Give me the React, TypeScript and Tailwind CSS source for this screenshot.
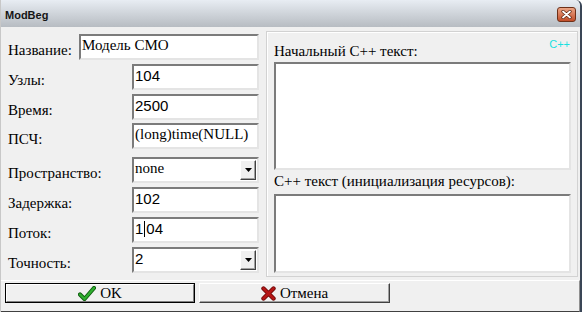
import React from "react"

const SANS = "font-['Liberation_Sans',Arial,sans-serif]"

interface IField {
    label: string,
    value: React.ReactNode,
    labelW?: string,
    inputW?: string,
    mono?: boolean,
    select?: boolean,
    gap?: string
}

const DropArrow = () => (
    <div className="w-[16px] h-[20px] mt-[1px] mr-[1px] flex items-center justify-center bg-[#f0f0f0] border border-t-white border-l-white border-b-[#404040] border-r-[#404040] shadow-[inset_-1px_-1px_0_#a0a0a0]">
        <svg width="7" height="4" viewBox="0 0 7 4"><path d="M0 0H7L3.5 4Z" fill="#000" /></svg>
    </div>
)

const Row = (props: IField) => {
    const { label, value, select, mono } = props
    return (
        <div className={`flex items-start h-[26px] ${props.gap ?? 'mt-[4px]'}`}>
            <div className={`${props.labelW ?? 'w-[124px]'} mt-[8px] text-[15px] leading-[17px] text-black whitespace-nowrap`}>{label}</div>
            <div className={`${props.inputW ?? 'w-[127px]'} h-[26px] bg-white border-2 border-t-[#7b7b7b] border-l-[#7b7b7b] border-b-[#e4e4e4] border-r-[#e4e4e4] flex items-start justify-between`}>
                <div className={`${mono ? SANS : ''} pl-[1px] pt-[1px] text-[15px] leading-[17px] text-black whitespace-nowrap`}>{value}</div>
                {select && <DropArrow />}
            </div>
        </div>
    )
}

const CheckIcon = () => (
    <svg width="18" height="15" viewBox="0 0 18 15">
        <path d="M2 8.5 L6.5 13 L16 2" fill="none" stroke="#0d5a0d" strokeWidth="4.2" strokeLinecap="round" strokeLinejoin="round" />
        <path d="M2 8.5 L6.5 13 L16 2" fill="none" stroke="#2fae2f" strokeWidth="2.4" strokeLinecap="round" strokeLinejoin="round" />
    </svg>
)

const CrossIcon = () => (
    <svg width="15" height="15" viewBox="0 0 15 15">
        <path d="M2.5 2.5 L12.5 12.5 M12.5 2.5 L2.5 12.5" stroke="#6e0808" strokeWidth="4.4" strokeLinecap="round" />
        <path d="M2.5 2.5 L12.5 12.5 M12.5 2.5 L2.5 12.5" stroke="#b51616" strokeWidth="2.6" strokeLinecap="round" />
    </svg>
)

const App = () => {
    return (
        <div className="w-[584px] h-[316px] bg-white overflow-hidden" style={{ fontFamily: '"Liberation Serif"' }}>
            <div className="w-[582px] h-[312px] bg-[#f0f0f0] border-l border-l-[#c8c8c8] border-r-2 border-r-[#3a4656] rounded-tr-[6px] flex flex-col">
                {/* title bar */}
                <div className="h-[27px] flex items-center justify-between pl-[4px] pr-[4px] rounded-tr-[6px] bg-gradient-to-b from-[#e8edf3] to-[#b7bcc2]">
                    <div className={`${SANS} text-[11px] font-bold text-[#151515] mt-[3px]`}>ModBeg</div>
                    <div className="w-[19px] h-[15px] mt-[2px] rounded-[3px] border border-[#6e3018] bg-gradient-to-b from-[#eba585] to-[#c24d28] flex items-center justify-center">
                        <svg width="11" height="9" viewBox="0 0 11 9">
                            <path d="M2 1.5 L9 7.5 M9 1.5 L2 7.5" stroke="#5a2410" strokeWidth="3.2" strokeLinecap="round" />
                            <path d="M2 1.5 L9 7.5 M9 1.5 L2 7.5" stroke="#fff" strokeWidth="1.8" strokeLinecap="round" />
                        </svg>
                    </div>
                </div>

                {/* body */}
                <div className="flex h-[250px]">
                    <div className="w-[264px] pl-[7px] pt-[7px]">
                        <Row label="Название:" value="Модель СМО" labelW="w-[71px]" inputW="w-[180px]" gap="mt-0" />
                        <Row label="Узлы:" value="104" mono />
                        <Row label="Время:" value="2500" mono />
                        <Row label="ПСЧ:" value="(long)time(NULL)" gap="mt-[3px]" />
                        <Row label="Пространство:" value="none" select gap="mt-[8px]" />
                        <Row label="Задержка:" value="102" mono />
                        <Row label="Поток:" mono value={<div className="flex items-center">1<div className="w-[1px] h-[16px] bg-black mx-[1px]" />04</div>} />
                        <Row label="Точность:" value="2" mono select />
                    </div>

                    <div className="relative w-[312px] h-[246px] mt-[4px] ml-[1px] border border-[#d2d2d2] shadow-[inset_1px_1px_0_#fff] pl-[7px] pr-[6px] pt-[11px] flex flex-col">
                        <div className={`${SANS} absolute top-[6px] right-[7px] text-[11px] leading-[13px] text-[#19e0e0]`}>C++</div>
                        <div className="text-[15px] leading-[17px] text-black">Начальный С++ текст:</div>
                        <div className="mt-[2px] h-[108px] bg-white border-2 border-t-[#7b7b7b] border-l-[#7b7b7b] border-b-[#e4e4e4] border-r-[#e4e4e4]" />
                        <div className="mt-[3px] text-[15px] leading-[17px] text-black">С++ текст (инициализация ресурсов):</div>
                        <div className="mt-[4px] h-[79px] bg-white border-2 border-t-[#7b7b7b] border-l-[#7b7b7b] border-b-[#e4e4e4] border-r-[#e4e4e4]" />
                    </div>
                </div>

                {/* buttons */}
                <div className="mt-[3px] flex-1 border-t border-t-white border-b border-b-[#404040] border-r border-r-[#909090] pl-[4px] pt-[2px] flex gap-[4px] items-start">
                    <div className="w-[190px] h-[20px] border border-black bg-[#f0f0f0]">
                        <div className="h-full flex items-center justify-center gap-[4px] border border-t-white border-l-white border-b-[#808080] border-r-[#808080]">
                            <CheckIcon />
                            <div className="text-[15px] leading-[17px] text-black">OK</div>
                        </div>
                    </div>
                    <div className="w-[191px] h-[20px] bg-[#f0f0f0] border border-t-white border-l-white border-b-[#404040] border-r-[#404040] shadow-[inset_-1px_-1px_0_#a0a0a0]">
                        <div className="h-full flex items-center justify-center gap-[4px]">
                            <CrossIcon />
                            <div className="text-[15px] leading-[17px] text-black">Отмена</div>
                        </div>
                    </div>
                </div>
            </div>
        </div>
    )
}

export default App
